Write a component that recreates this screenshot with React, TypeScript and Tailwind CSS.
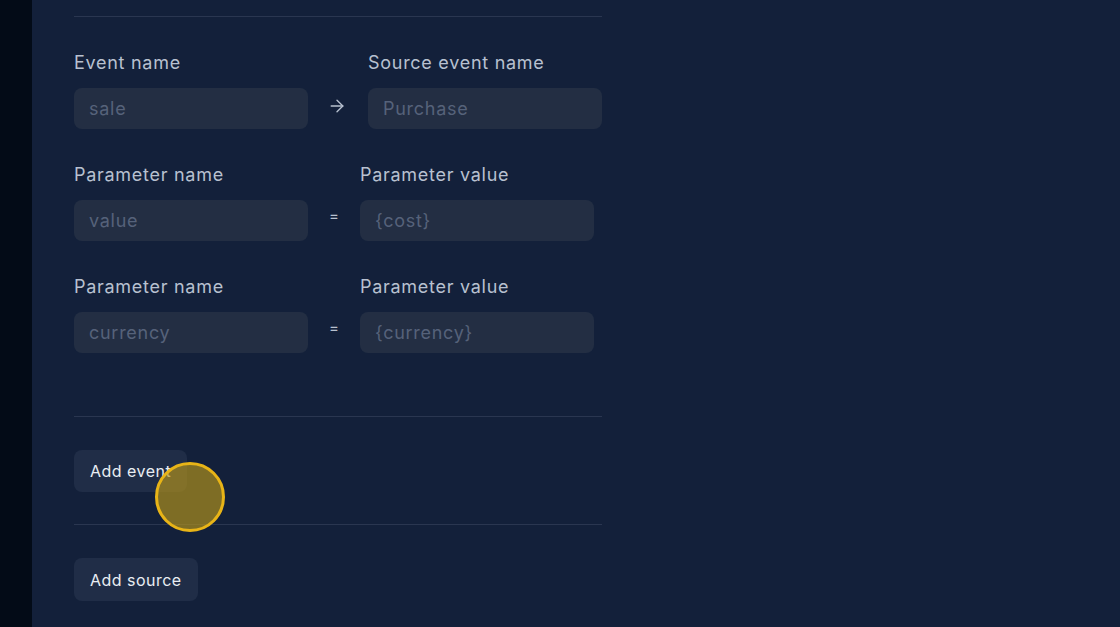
import { ArrowRight } from "lucide-react";

const font = { fontFamily: '"Inter", "Open Sans", sans-serif' };

function Field({ label, placeholder }: { label: string; placeholder: string }) {
  return (
    <div className="flex flex-col w-[234px]">
      <label className="text-[18px] leading-6 text-[#b8c1d0] tracking-[0.04em] mb-[13px]">{label}</label>
      <input
        type="text"
        placeholder={placeholder}
        className="h-[41px] rounded-lg bg-[#232e43] px-[15px] text-[18px] text-[#cfd6e1] placeholder:text-[#56627a] outline-none tracking-[0.04em]"
      />
    </div>
  );
}

export default function App() {
  return (
    <div className="flex w-[1120px] h-[627px] overflow-hidden bg-[#13203a]" style={font}>
      {/* left strip */}
      <div className="w-8 shrink-0 bg-[#030b17]" />

      <main className="relative flex-1 pl-[42px]">
        <div className="w-[528px]">
          <div className="mt-4 h-px bg-[#2a3650]" />

          {/* event row */}
          <div className="mt-[34px] flex items-start">
            <Field label="Event name" placeholder="sale" />
            <div className="w-[60px] pt-[37px] h-[78px] flex items-center justify-center -translate-y-[3px] -translate-x-[1px]">
              <ArrowRight className="w-5 h-5 text-[#b8c1d0]" strokeWidth={1.6} />
            </div>
            <Field label="Source event name" placeholder="Purchase" />
          </div>

          {/* parameter rows */}
          <div className="mt-[34px] flex items-start">
            <Field label="Parameter name" placeholder="value" />
            <div className="w-[52px] pt-[37px] h-[78px] flex items-center justify-center text-[15px] text-[#b8c1d0] -translate-y-[4px]">=</div>
            <Field label="Parameter value" placeholder="{cost}" />
          </div>

          <div className="mt-[34px] flex items-start">
            <Field label="Parameter name" placeholder="currency" />
            <div className="w-[52px] pt-[37px] h-[78px] flex items-center justify-center text-[15px] text-[#b8c1d0] -translate-y-[4px]">=</div>
            <Field label="Parameter value" placeholder="{currency}" />
          </div>

          <div className="mt-[63px] h-px bg-[#2a3650]" />

          <button className="mt-[33px] h-[42px] px-4 rounded-lg bg-[#202d47] text-[16px] tracking-[0.03em] text-[#e9edf3]">
            Add event
          </button>

          <div className="mt-[32px] h-px bg-[#2a3650]" />

          <button className="mt-[33px] h-[43px] px-4 rounded-lg bg-[#202d47] text-[16px] tracking-[0.03em] text-[#e9edf3]">
            Add source
          </button>
        </div>

        {/* click highlight */}
        <div className="absolute left-[123px] top-[462px] w-[70px] h-[70px] rounded-full border-[3px] border-[#e8b417] bg-[#b8961a]/65" />
      </main>
    </div>
  );
}
